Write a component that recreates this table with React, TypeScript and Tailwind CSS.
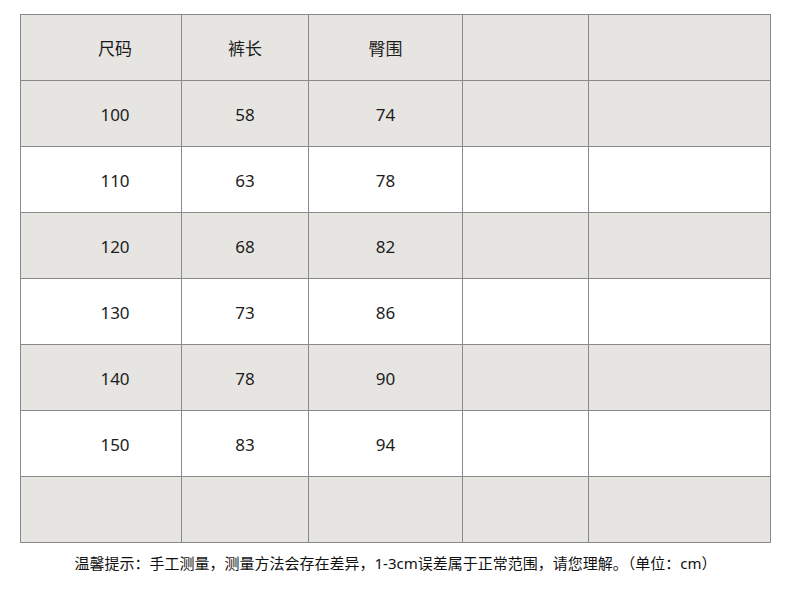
import React from "react";

const cols = ["w-[161px]", "w-[127px]", "w-[154px]", "w-[126px]", "w-[182px]"];

const rows: { cells: string[]; shaded: boolean }[] = [
  { cells: ["尺码", "裤长", "臀围", "", ""], shaded: true },
  { cells: ["100", "58", "74", "", ""], shaded: true },
  { cells: ["110", "63", "78", "", ""], shaded: false },
  { cells: ["120", "68", "82", "", ""], shaded: true },
  { cells: ["130", "73", "86", "", ""], shaded: false },
  { cells: ["140", "78", "90", "", ""], shaded: true },
  { cells: ["150", "83", "94", "", ""], shaded: false },
  { cells: ["", "", "", "", ""], shaded: true },
];

export default function App() {
  return (
    <div
      className="w-[790px] h-[609px] bg-white pt-[14px] pl-[20px] text-[#1c1c1c]"
      style={{ fontFamily: '"Noto Sans", "Noto Sans CJK SC", sans-serif' }}
    >
      <div className="flex flex-col w-[751px] border-l border-t border-[#8a8a8a]">
        {rows.map((r, i) => (
          <div key={i} className={`flex h-[66px] ${r.shaded ? "bg-[#e7e5e2]" : "bg-white"}`}>
            {r.cells.map((c, j) => (
              <div
                key={j}
                className={`${cols[j]} h-full border-r border-b border-[#8a8a8a] flex items-center justify-center text-[17px] pt-[3px] ${j === 0 ? "pl-[28px]" : ""}`}
              >
                {c}
              </div>
            ))}
          </div>
        ))}
      </div>
      <div className="w-[751px] mt-[10px] text-center text-[15px] leading-[20px] text-[#111]">
        温馨提示：手工测量，测量方法会存在差异，1-3cm误差属于正常范围，请您理解。（单位：cm）
      </div>
    </div>
  );
}
